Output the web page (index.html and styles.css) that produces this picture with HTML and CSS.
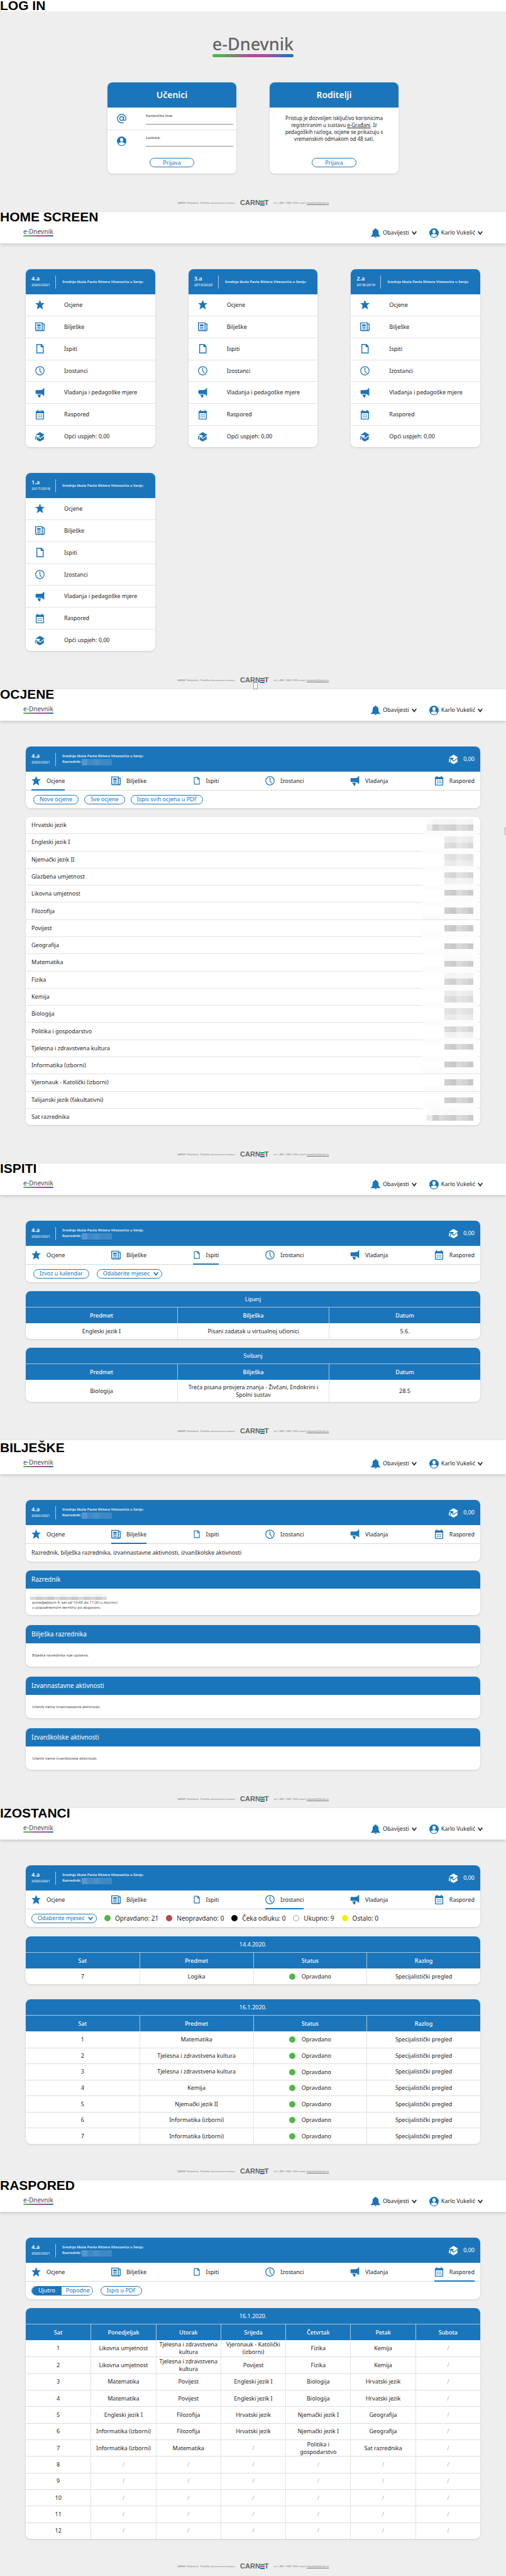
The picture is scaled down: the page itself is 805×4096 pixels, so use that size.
FILE: index.html
```html
<!DOCTYPE html>
<html lang="hr">
<head>
<meta charset="utf-8">
<meta name="viewport" content="width=device-width, initial-scale=1">
<title>e-Dnevnik</title>
<link rel="stylesheet" href="styles.css">
</head>
<body>
<svg class="sprite" aria-hidden="true">
  <symbol id="star" viewBox="0 0 24 24"><path d="M12 0l3.4 8H24l-6.6 5.600L20 24l-8-5.200L4 24l2.600-10.400L0 8h8.600z"/></symbol>
  <symbol id="news" viewBox="0 0 24 24"><path fill-rule="evenodd" d="M0 1h19v3h5v16.500a2.500 2.500 0 0 1-2.500 2.500H2.500A2.500 2.500 0 0 1 0 20.500zM2.300 3.200v17.300h14.500V3.200zM19 6.200v14.300h2.700V6.200z"/><path d="M5 6h9v4.500H5zM5 12.500h9v2H5zM5 16.500h9v2H5z"/></symbol>
  <symbol id="file" viewBox="0 0 24 24"><path fill-rule="evenodd" d="M3 0h13.500L21.500 6v18H3zM5.300 2.300v19.400h13.900V7.800H14V2.300z"/></symbol>
  <symbol id="clock" viewBox="0 0 24 24"><g fill="none" stroke="currentColor" stroke-width="2" stroke-linecap="round"><circle cx="12" cy="12" r="10.800"/><path d="M12 5v7.500l4 5.500"/></g></symbol>
  <symbol id="horn" viewBox="0 0 24 24"><path d="M1 7.500C1 6 2 5.300 3.500 5.300H13c4 0 7-2 8.500-5.300H23v19.500h-1.500c-2-2.800-4.500-4-8.500-4.500H3.500C2 15 1 14 1 12.500zM5.500 16.700H14l1 1.800-2 1V24H9.500z"/></symbol>
  <symbol id="calendar" viewBox="0 0 24 24"><path fill-rule="evenodd" d="M5 0h2.500v2.500h9V0H19v2.500h1.500a2 2 0 0 1 2 2V22a2 2 0 0 1-2 2h-17a2 2 0 0 1-2-2V4.500a2 2 0 0 1 2-2H5zM3.700 8v13.800h16.600V8z"/><path d="M6.500 11H9v2.500H6.500zM10.800 11h2.500v2.500h-2.500zM15 11h2.500v2.500H15zM6.500 16H9v2.500H6.500zM10.800 16h2.500v2.500h-2.500zM15 16h2.500v2.500H15z"/></symbol>
  <symbol id="cap" viewBox="0 0 24 24"><path d="M12 0l11.500 6.700-11 8.500L9.500 12l3.500-2.500c-2-1.800-6-2-10.500-1.700L1 7z"/><path d="M1 10h3l-1.500 9H0zM5 11.500l7.500 6 9.500-7.500v8.500L12 24l-7.500-4z"/></symbol>
  <symbol id="bell" viewBox="0 0 24 24"><path d="M12 0c1.300 0 2 1 2 2 4 1 5.500 4 5.500 8 0 6 1.500 8 4.500 9.500V21H0v-1.500C3 18 4.500 16 4.500 10c0-4 1.500-7 5.500-8 0-1 .7-2 2-2zM9.500 22h5c0 1.200-1 2-2.500 2s-2.500-.8-2.500-2z"/></symbol>
  <symbol id="user" viewBox="0 0 24 24"><path fill-rule="evenodd" d="M12 0a12 12 0 1 0 0 24 12 12 0 0 0 0-24zm0 3.500c2.500 0 4 2 4 4.700S14.500 13.500 12 13.500 8 11 8 8.200s1.500-4.700 4-4.700zM12 22c-3.500 0-6.500-1.500-8-4.200C5 15.800 8 14.800 12 14.800s7 1 8 3C18.500 20.500 15.500 22 12 22z"/></symbol>
  <symbol id="at" viewBox="0 0 24 24"><g fill="none" stroke="currentColor" stroke-width="2.200"><circle cx="12" cy="12" r="4.800"/><path d="M16.800 7v7c0 2 1 3 2.600 3s3.400-1.500 3.400-5A10.800 10.800 0 1 0 12 22.800h5"/></g></symbol>
  <symbol id="chev" viewBox="0 0 12 12"><path d="M1 3l5 6.500L11 3" fill="none" stroke="currentColor" stroke-width="2.400"/></symbol>
</svg>

<section class="screen">
  <h2 class="screen-title login-title">LOG IN</h2>
  <main class="login">
    <h1 class="brand brand-lg">e-Dnevnik</h1>
    <div class="login-cards">
      <form class="card login-card">
        <h3 class="login-head">Učenici</h3>
        <div class="field"><svg class="icon"><use href="#at"/></svg><div class="field-in"><label for="user-name">Korisničko ime:</label><input id="user-name" type="text"></div></div>
        <div class="field"><svg class="icon"><use href="#user"/></svg><div class="field-in"><label for="pass">Lozinka:</label><input id="pass" type="password"></div></div>
        <button class="pill login-btn" type="button">Prijava</button>
      </form>
      <div class="card login-card">
        <h3 class="login-head">Roditelji</h3>
        <p class="login-text">Pristup je dozvoljen isključivo korisnicima registriranim u sustavu <a href="#">e-Građani</a>. Iz pedagoških razloga, ocjene se prikazuju s vremenskim odmakom od 48 sati.</p>
        <button class="pill login-btn" type="button">Prijava</button>
      </div>
    </div>
  </main>
  <footer class="foot"><span>CARNET Helpdesk - Podrška obrazovnom sustavu</span><span class="carnet">CARN<i class="bars"></i>T</span><span>tel: +385 1 6661 500 e-mail: <a href="#">helpdesk@skole.hr</a></span></footer>
</section>

<section class="screen">
  <header class="top">
    <h2 class="screen-title">HOME SCREEN</h2>
    <div class="bar"><a class="brand" href="#">e-Dnevnik</a><nav class="user-nav"><button class="nav-btn"><svg class="icon"><use href="#bell"/></svg>Obavijesti<svg class="chev"><use href="#chev"/></svg></button><button class="nav-btn"><svg class="icon"><use href="#user"/></svg>Karlo Vukelić<svg class="chev"><use href="#chev"/></svg></button></nav></div>
  </header>
  <main class="content classes">
    <article class="card class-card">
      <header class="class-head"><div class="year"><b>4.a</b><span>2020/2021</span></div><p class="school">Srednja škola Pavla Rittera Vitezovića u Senju</p></header>
      <a class="row" href="#"><svg class="icon"><use href="#star"/></svg>Ocjene</a>
      <a class="row" href="#"><svg class="icon"><use href="#news"/></svg>Bilješke</a>
      <a class="row" href="#"><svg class="icon"><use href="#file"/></svg>Ispiti</a>
      <a class="row" href="#"><svg class="icon"><use href="#clock"/></svg>Izostanci</a>
      <a class="row" href="#"><svg class="icon"><use href="#horn"/></svg>Vladanja i pedagoške mjere</a>
      <a class="row" href="#"><svg class="icon"><use href="#calendar"/></svg>Raspored</a>
      <a class="row" href="#"><svg class="icon"><use href="#cap"/></svg>Opći uspjeh: 0,00</a>
    </article>
    <article class="card class-card">
      <header class="class-head"><div class="year"><b>3.a</b><span>2019/2020</span></div><p class="school">Srednja škola Pavla Rittera Vitezovića u Senju</p></header>
      <a class="row" href="#"><svg class="icon"><use href="#star"/></svg>Ocjene</a>
      <a class="row" href="#"><svg class="icon"><use href="#news"/></svg>Bilješke</a>
      <a class="row" href="#"><svg class="icon"><use href="#file"/></svg>Ispiti</a>
      <a class="row" href="#"><svg class="icon"><use href="#clock"/></svg>Izostanci</a>
      <a class="row" href="#"><svg class="icon"><use href="#horn"/></svg>Vladanja i pedagoške mjere</a>
      <a class="row" href="#"><svg class="icon"><use href="#calendar"/></svg>Raspored</a>
      <a class="row" href="#"><svg class="icon"><use href="#cap"/></svg>Opći uspjeh: 0,00</a>
    </article>
    <article class="card class-card">
      <header class="class-head"><div class="year"><b>2.a</b><span>2018/2019</span></div><p class="school">Srednja škola Pavla Rittera Vitezovića u Senju</p></header>
      <a class="row" href="#"><svg class="icon"><use href="#star"/></svg>Ocjene</a>
      <a class="row" href="#"><svg class="icon"><use href="#news"/></svg>Bilješke</a>
      <a class="row" href="#"><svg class="icon"><use href="#file"/></svg>Ispiti</a>
      <a class="row" href="#"><svg class="icon"><use href="#clock"/></svg>Izostanci</a>
      <a class="row" href="#"><svg class="icon"><use href="#horn"/></svg>Vladanja i pedagoške mjere</a>
      <a class="row" href="#"><svg class="icon"><use href="#calendar"/></svg>Raspored</a>
      <a class="row" href="#"><svg class="icon"><use href="#cap"/></svg>Opći uspjeh: 0,00</a>
    </article>
    <article class="card class-card">
      <header class="class-head"><div class="year"><b>1.a</b><span>2017/2018</span></div><p class="school">Srednja škola Pavla Rittera Vitezovića u Senju</p></header>
      <a class="row" href="#"><svg class="icon"><use href="#star"/></svg>Ocjene</a>
      <a class="row" href="#"><svg class="icon"><use href="#news"/></svg>Bilješke</a>
      <a class="row" href="#"><svg class="icon"><use href="#file"/></svg>Ispiti</a>
      <a class="row" href="#"><svg class="icon"><use href="#clock"/></svg>Izostanci</a>
      <a class="row" href="#"><svg class="icon"><use href="#horn"/></svg>Vladanja i pedagoške mjere</a>
      <a class="row" href="#"><svg class="icon"><use href="#calendar"/></svg>Raspored</a>
      <a class="row" href="#"><svg class="icon"><use href="#cap"/></svg>Opći uspjeh: 0,00</a>
    </article>
  </main>
  <footer class="foot"><span>CARNET Helpdesk - Podrška obrazovnom sustavu</span><span class="carnet">CARN<i class="bars"></i>T</span><span>tel: +385 1 6661 500 e-mail: <a href="#">helpdesk@skole.hr</a></span><i class="handle handle-bottom"></i></footer>
</section>

<section class="screen">
  <header class="top">
    <h2 class="screen-title">OCJENE</h2>
    <div class="bar"><a class="brand" href="#">e-Dnevnik</a><nav class="user-nav"><button class="nav-btn"><svg class="icon"><use href="#bell"/></svg>Obavijesti<svg class="chev"><use href="#chev"/></svg></button><button class="nav-btn"><svg class="icon"><use href="#user"/></svg>Karlo Vukelić<svg class="chev"><use href="#chev"/></svg></button></nav></div>
  </header>
  <main class="content">
    <div class="card">
      <header class="class-head"><div class="year"><b>4.a</b><span>2020/2021</span></div><p class="school">Srednja škola Pavla Rittera Vitezovića u Senju<br>Razrednik:<i class="veil"></i></p><p class="avg"><svg class="icon"><use href="#cap"/></svg>0,00</p></header>
      <nav class="tabs"><a class="on" href="#"><svg class="icon"><use href="#star"/></svg>Ocjene</a><a href="#"><svg class="icon"><use href="#news"/></svg>Bilješke</a><a href="#"><svg class="icon thin"><use href="#file"/></svg>Ispiti</a><a href="#"><svg class="icon"><use href="#clock"/></svg>Izostanci</a><a href="#"><svg class="icon"><use href="#horn"/></svg>Vladanja</a><a href="#"><svg class="icon"><use href="#calendar"/></svg>Raspored</a></nav>
      <div class="tools inset"><button class="pill">Nove ocjene</button><button class="pill">Sve ocjene</button><button class="pill">Ispis svih ocjena u PDF</button></div>
    </div>
    <div class="card grades">
      <a href="#">Hrvatski jezik</a><a href="#">Engleski jezik I</a><a href="#">Njemački jezik II</a><a href="#">Glazbena umjetnost</a><a href="#">Likovna umjetnost</a><a href="#">Filozofija</a><a href="#">Povijest</a><a href="#">Geografija</a><a href="#">Matematika</a><a href="#">Fizika</a><a href="#">Kemija</a><a href="#">Biologija</a><a href="#">Politika i gospodarstvo</a><a href="#">Tjelesna i zdravstvena kultura</a><a href="#">Informatika (izborni)</a><a href="#">Vjeronauk - Katolički (izborni)</a><a href="#">Talijanski jezik (fakultativni)</a><a href="#">Sat razrednika</a>
      <svg class="mosaic" viewBox="0 0 93 513" preserveAspectRatio="none" shape-rendering="crispEdges" aria-hidden="true">
        <defs>
          <g id="m5"><path fill-opacity=".88" d="M37 0h10v10H37z"/><path d="M47 0h10v10H47z"/><path fill-opacity=".68" d="M57 0h10v10H57z"/><path fill-opacity=".82" d="M67 0h10v10H67z"/><path d="M77 0h9v10h-9z"/></g>
          <g id="m8"><path fill-opacity=".4" d="M7 0h10v10H7z"/><path d="M17 0h10v10H17z"/><path fill-opacity=".75" d="M27 0h10v10H27z"/><use href="#m5"/></g>
          <path id="band" fill="#fcfcfc" d="M0 0h93v10H0z"/>
        </defs>
        <use href="#band" y="20"/><use href="#band" y="50"/><use href="#band" y="80"/><use href="#band" y="110"/><use href="#band" y="140"/><use href="#band" y="160"/><use href="#band" y="190"/><use href="#band" y="220"/><use href="#band" y="250"/><use href="#band" y="280"/><use href="#band" y="310"/><use href="#band" y="340"/><use href="#band" y="370"/><use href="#band" y="400"/><use href="#band" y="420"/><use href="#band" y="450"/><use href="#band" y="480"/>
        <use href="#m8" y="0" opacity=".04"/><use href="#m8" y="10" opacity=".18"/>
        <use href="#m5" y="30" opacity=".08"/><use href="#m5" y="40" opacity=".14"/>
        <use href="#m5" y="60" opacity=".12"/><use href="#m5" y="70" opacity=".08"/>
        <use href="#m5" y="90" opacity=".16"/><use href="#m5" y="100" opacity=".05"/>
        <use href="#m5" y="120" opacity=".2"/><use href="#m5" y="130" opacity=".01"/>
        <use href="#m5" y="150" opacity=".21"/><use href="#m5" y="180" opacity=".21"/><use href="#m5" y="210" opacity=".21"/>
        <use href="#m5" y="230" opacity=".02"/><use href="#m5" y="240" opacity=".2"/>
        <use href="#m5" y="260" opacity=".04"/><use href="#m5" y="270" opacity=".18"/>
        <use href="#m5" y="290" opacity=".08"/><use href="#m5" y="300" opacity=".14"/>
        <use href="#m5" y="320" opacity=".12"/><use href="#m5" y="330" opacity=".08"/>
        <use href="#m5" y="350" opacity=".16"/><use href="#m5" y="360" opacity=".05"/>
        <use href="#m5" y="380" opacity=".2"/><use href="#m5" y="410" opacity=".21"/><use href="#m5" y="440" opacity=".21"/><use href="#m5" y="470" opacity=".21"/>
        <use href="#m8" y="490" opacity=".02"/><use href="#m8" y="500" opacity=".2"/>
      </svg>
      <i class="handle handle-side"></i>
    </div>
  </main>
  <footer class="foot"><span>CARNET Helpdesk - Podrška obrazovnom sustavu</span><span class="carnet">CARN<i class="bars"></i>T</span><span>tel: +385 1 6661 500 e-mail: <a href="#">helpdesk@skole.hr</a></span></footer>
</section>

<section class="screen">
  <header class="top">
    <h2 class="screen-title">ISPITI</h2>
    <div class="bar"><a class="brand" href="#">e-Dnevnik</a><nav class="user-nav"><button class="nav-btn"><svg class="icon"><use href="#bell"/></svg>Obavijesti<svg class="chev"><use href="#chev"/></svg></button><button class="nav-btn"><svg class="icon"><use href="#user"/></svg>Karlo Vukelić<svg class="chev"><use href="#chev"/></svg></button></nav></div>
  </header>
  <main class="content">
    <div class="card">
      <header class="class-head"><div class="year"><b>4.a</b><span>2020/2021</span></div><p class="school">Srednja škola Pavla Rittera Vitezovića u Senju<br>Razrednik:<i class="veil"></i></p><p class="avg"><svg class="icon"><use href="#cap"/></svg>0,00</p></header>
      <nav class="tabs"><a href="#"><svg class="icon"><use href="#star"/></svg>Ocjene</a><a href="#"><svg class="icon"><use href="#news"/></svg>Bilješke</a><a class="on" href="#"><svg class="icon thin"><use href="#file"/></svg>Ispiti</a><a href="#"><svg class="icon"><use href="#clock"/></svg>Izostanci</a><a href="#"><svg class="icon"><use href="#horn"/></svg>Vladanja</a><a href="#"><svg class="icon"><use href="#calendar"/></svg>Raspored</a></nav>
      <div class="tools inset wide"><button class="pill">Izvoz u kalendar</button><span class="picker"><select class="pill" aria-label="Odaberite mjesec"><option>Odaberite mjesec</option></select><svg class="chev"><use href="#chev"/></svg></span></div>
    </div>
    <table class="card grid">
      <thead><tr><th colspan="3">Lipanj</th></tr><tr><th>Predmet</th><th>Bilješka</th><th>Datum</th></tr></thead>
      <tbody><tr><td>Engleski jezik I</td><td>Pisani zadatak u virtualnoj učionici</td><td>5.6.</td></tr></tbody>
    </table>
    <table class="card grid">
      <thead><tr><th colspan="3">Svibanj</th></tr><tr><th>Predmet</th><th>Bilješka</th><th>Datum</th></tr></thead>
      <tbody><tr class="tall"><td>Biologija</td><td>Treća pisana provjera znanja - Živčani, Endokrini i Spolni sustav</td><td>28.5</td></tr></tbody>
    </table>
  </main>
  <footer class="foot"><span>CARNET Helpdesk - Podrška obrazovnom sustavu</span><span class="carnet">CARN<i class="bars"></i>T</span><span>tel: +385 1 6661 500 e-mail: <a href="#">helpdesk@skole.hr</a></span></footer>
</section>

<section class="screen">
  <header class="top accent">
    <h2 class="screen-title">BILJEŠKE</h2>
    <div class="bar"><a class="brand" href="#">e-Dnevnik</a><nav class="user-nav"><button class="nav-btn"><svg class="icon"><use href="#bell"/></svg>Obavijesti<svg class="chev"><use href="#chev"/></svg></button><button class="nav-btn"><svg class="icon"><use href="#user"/></svg>Karlo Vukelić<svg class="chev"><use href="#chev"/></svg></button></nav></div>
  </header>
  <main class="content notes">
    <div class="card">
      <header class="class-head"><div class="year"><b>4.a</b><span>2020/2021</span></div><p class="school">Srednja škola Pavla Rittera Vitezovića u Senju<br>Razrednik:<i class="veil"></i></p><p class="avg"><svg class="icon"><use href="#cap"/></svg>0,00</p></header>
      <nav class="tabs"><a href="#"><svg class="icon"><use href="#star"/></svg>Ocjene</a><a class="on" href="#"><svg class="icon"><use href="#news"/></svg>Bilješke</a><a href="#"><svg class="icon thin"><use href="#file"/></svg>Ispiti</a><a href="#"><svg class="icon"><use href="#clock"/></svg>Izostanci</a><a href="#"><svg class="icon"><use href="#horn"/></svg>Vladanja</a><a href="#"><svg class="icon"><use href="#calendar"/></svg>Raspored</a></nav>
      <p class="tools">Razrednik, bilješka razrednika, izvannastavne aktivnosti, izvanškolske aktivnosti</p>
    </div>
    <section class="card note"><h3>Razrednik</h3><div class="note-body tutor"><i class="name-veil"></i><p>ponedjeljkom 4. sat od 10:45 do 11:30 u zbornici<br>u popodnevnom terminu po dogovoru</p></div></section>
    <section class="card note"><h3>Bilješka razrednika</h3><p class="note-body">Bilješka razrednika nije upisana.</p></section>
    <section class="card note"><h3>Izvannastavne aktivnosti</h3><p class="note-body">Učenik nema izvannastavne aktivnosti.</p></section>
    <section class="card note"><h3>Izvanškolske aktivnosti</h3><p class="note-body">Učenik nema izvanškolske aktivnosti.</p></section>
  </main>
  <footer class="foot"><span>CARNET Helpdesk - Podrška obrazovnom sustavu</span><span class="carnet">CARN<i class="bars"></i>T</span><span>tel: +385 1 6661 500 e-mail: <a href="#">helpdesk@skole.hr</a></span></footer>
</section>

<section class="screen">
  <header class="top">
    <h2 class="screen-title">IZOSTANCI</h2>
    <div class="bar"><a class="brand" href="#">e-Dnevnik</a><nav class="user-nav"><button class="nav-btn"><svg class="icon"><use href="#bell"/></svg>Obavijesti<svg class="chev"><use href="#chev"/></svg></button><button class="nav-btn"><svg class="icon"><use href="#user"/></svg>Karlo Vukelić<svg class="chev"><use href="#chev"/></svg></button></nav></div>
  </header>
  <main class="content absences">
    <div class="card">
      <header class="class-head"><div class="year"><b>4.a</b><span>2020/2021</span></div><p class="school">Srednja škola Pavla Rittera Vitezovića u Senju<br>Razrednik:<i class="veil"></i></p><p class="avg"><svg class="icon"><use href="#cap"/></svg>0,00</p></header>
      <nav class="tabs"><a href="#"><svg class="icon"><use href="#star"/></svg>Ocjene</a><a href="#"><svg class="icon"><use href="#news"/></svg>Bilješke</a><a href="#"><svg class="icon thin"><use href="#file"/></svg>Ispiti</a><a class="on" href="#"><svg class="icon"><use href="#clock"/></svg>Izostanci</a><a href="#"><svg class="icon"><use href="#horn"/></svg>Vladanja</a><a href="#"><svg class="icon"><use href="#calendar"/></svg>Raspored</a></nav>
      <div class="tools wide"><span class="picker"><select class="pill" aria-label="Odaberite mjesec"><option>Odaberite mjesec</option></select><svg class="chev"><use href="#chev"/></svg></span><span class="key"><i class="dot"></i>Opravdano: 21</span><span class="key"><i class="dot red"></i>Neopravdano: 0</span><span class="key"><i class="dot black"></i>Čeka odluku: 0</span><span class="key"><i class="dot hollow"></i>Ukupno: 9</span><span class="key"><i class="dot yellow"></i>Ostalo: 0</span></div>
    </div>
    <table class="card grid">
      <thead><tr><th colspan="4">14.4.2020.</th></tr><tr><th>Sat</th><th>Predmet</th><th>Status</th><th>Razlog</th></tr></thead>
      <tbody><tr><td>7</td><td>Logika</td><td><span class="status"><i class="dot"></i>Opravdano</span></td><td>Specijalistički pregled</td></tr></tbody>
    </table>
    <table class="card grid days">
      <thead><tr><th colspan="4">16.1.2020.</th></tr><tr><th>Sat</th><th>Predmet</th><th>Status</th><th>Razlog</th></tr></thead>
      <tbody>
        <tr><td>1</td><td>Matematika</td><td><span class="status"><i class="dot"></i>Opravdano</span></td><td>Specijalistički pregled</td></tr>
        <tr><td>2</td><td>Tjelesna i zdravstvena kultura</td><td><span class="status"><i class="dot"></i>Opravdano</span></td><td>Specijalistički pregled</td></tr>
        <tr><td>3</td><td>Tjelesna i zdravstvena kultura</td><td><span class="status"><i class="dot"></i>Opravdano</span></td><td>Specijalistički pregled</td></tr>
        <tr><td>4</td><td>Kemija</td><td><span class="status"><i class="dot"></i>Opravdano</span></td><td>Specijalistički pregled</td></tr>
        <tr><td>5</td><td>Njemački jezik II</td><td><span class="status"><i class="dot"></i>Opravdano</span></td><td>Specijalistički pregled</td></tr>
        <tr><td>6</td><td>Informatika (izborni)</td><td><span class="status"><i class="dot"></i>Opravdano</span></td><td>Specijalistički pregled</td></tr>
        <tr><td>7</td><td>Informatika (izborni)</td><td><span class="status"><i class="dot"></i>Opravdano</span></td><td>Specijalistički pregled</td></tr>
      </tbody>
    </table>
  </main>
  <footer class="foot"><span>CARNET Helpdesk - Podrška obrazovnom sustavu</span><span class="carnet">CARN<i class="bars"></i>T</span><span>tel: +385 1 6661 500 e-mail: <a href="#">helpdesk@skole.hr</a></span></footer>
</section>

<section class="screen">
  <header class="top">
    <h2 class="screen-title">RASPORED</h2>
    <div class="bar"><a class="brand" href="#">e-Dnevnik</a><nav class="user-nav"><button class="nav-btn"><svg class="icon"><use href="#bell"/></svg>Obavijesti<svg class="chev"><use href="#chev"/></svg></button><button class="nav-btn"><svg class="icon"><use href="#user"/></svg>Karlo Vukelić<svg class="chev"><use href="#chev"/></svg></button></nav></div>
  </header>
  <main class="content schedule">
    <div class="card">
      <header class="class-head"><div class="year"><b>4.a</b><span>2020/2021</span></div><p class="school">Srednja škola Pavla Rittera Vitezovića u Senju<br>Razrednik:<i class="veil"></i></p><p class="avg"><svg class="icon"><use href="#cap"/></svg>0,00</p></header>
      <nav class="tabs"><a href="#"><svg class="icon"><use href="#star"/></svg>Ocjene</a><a href="#"><svg class="icon"><use href="#news"/></svg>Bilješke</a><a href="#"><svg class="icon thin"><use href="#file"/></svg>Ispiti</a><a href="#"><svg class="icon"><use href="#clock"/></svg>Izostanci</a><a href="#"><svg class="icon"><use href="#horn"/></svg>Vladanja</a><a class="on" href="#"><svg class="icon"><use href="#calendar"/></svg>Raspored</a></nav>
      <div class="tools wide"><span class="toggle"><button class="active">Ujutro</button><button>Popodne</button></span><button class="pill">Ispis u PDF</button></div>
    </div>
    <table class="card grid week">
      <thead><tr><th colspan="7">16.1.2020.</th></tr><tr><th>Sat</th><th>Ponedjeljak</th><th>Utorak</th><th>Srijeda</th><th>Četvrtak</th><th>Petak</th><th>Subota</th></tr></thead>
      <tbody>
        <tr><td>1</td><td>Likovna umjetnost</td><td>Tjelesna i zdravstvena kultura</td><td>Vjeronauk - Katolički (izborni)</td><td>Fizika</td><td>Kemija</td><td class="no">/</td></tr>
        <tr><td>2</td><td>Likovna umjetnost</td><td>Tjelesna i zdravstvena kultura</td><td>Povijest</td><td>Fizika</td><td>Kemija</td><td class="no">/</td></tr>
        <tr><td>3</td><td>Matematika</td><td>Povijest</td><td>Engleski jezik I</td><td>Biologija</td><td>Hrvatski jezik</td><td class="no">/</td></tr>
        <tr><td>4</td><td>Matematika</td><td>Povijest</td><td>Engleski jezik I</td><td>Biologija</td><td>Hrvatski jezik</td><td class="no">/</td></tr>
        <tr><td>5</td><td>Engleski jezik I</td><td>Filozofija</td><td>Hrvatski jezik</td><td>Njemački jezik I</td><td>Geografija</td><td class="no">/</td></tr>
        <tr><td>6</td><td>Informatika (izborni)</td><td>Filozofija</td><td>Hrvatski jezik</td><td>Njemački jezik I</td><td>Geografija</td><td class="no">/</td></tr>
        <tr><td>7</td><td>Informatika (izborni)</td><td>Matematika</td><td class="no">/</td><td>Politika i<br>gospodarstvo</td><td>Sat razrednika</td><td class="no">/</td></tr>
        <tr><td>8</td><td class="no">/</td><td class="no">/</td><td class="no">/</td><td class="no">/</td><td class="no">/</td><td class="no">/</td></tr>
        <tr><td>9</td><td class="no">/</td><td class="no">/</td><td class="no">/</td><td class="no">/</td><td class="no">/</td><td class="no">/</td></tr>
        <tr><td>10</td><td class="no">/</td><td class="no">/</td><td class="no">/</td><td class="no">/</td><td class="no">/</td><td class="no">/</td></tr>
        <tr><td>11</td><td class="no">/</td><td class="no">/</td><td class="no">/</td><td class="no">/</td><td class="no">/</td><td class="no">/</td></tr>
        <tr><td>12</td><td class="no">/</td><td class="no">/</td><td class="no">/</td><td class="no">/</td><td class="no">/</td><td class="no">/</td></tr>
      </tbody>
    </table>
  </main>
  <footer class="foot"><span>CARNET Helpdesk - Podrška obrazovnom sustavu</span><span class="carnet">CARN<i class="bars"></i>T</span><span>tel: +385 1 6661 500 e-mail: <a href="#">helpdesk@skole.hr</a></span></footer>
</section>
</body>
</html>
```
FILE: styles.css
```css
:root {
  --blue: #1b75bb;
  --ink: #262626;
  --line: #e2e2e2;
  --bg: #eeeeee;
}
* { box-sizing: border-box; }
html { background: var(--bg); }
body {
  margin: 0;
  background: var(--bg);
  color: var(--ink);
  font-family: "Noto Sans", "Open Sans", sans-serif;
  font-size: 9px;
  line-height: 12px;
  overflow-x: hidden;
}
h1, h2, h3, p { margin: 0; font-weight: 400; font-size: inherit; }
a { color: inherit; text-decoration: none; }
button, input, select { font: inherit; color: inherit; margin: 0; }
button { cursor: pointer; }
.sprite { position: absolute; width: 0; height: 0; }
.icon { width: 15px; height: 15px; fill: currentColor; color: var(--blue); flex: none; }
.icon.thin { width: 12px; }
.chev { width: 8px; height: 8px; flex: none; }

/* Screen heading and top bar */
.screen-title {
  font-family: "Liberation Sans", Arial, sans-serif;
  font-weight: 700;
  font-size: 21px;
  line-height: 16px;
  color: #000;
}
.login-title { background: #fff; line-height: 18px; }
.top { background: #fff; box-shadow: 0 2px 5px rgba(0, 0, 0, .16); position: relative; }
.top.accent { padding-top: 4px; }
.bar { height: 34px; padding: 0 37px; display: flex; align-items: center; justify-content: space-between; }
.brand { color: #636466; font-weight: 500; font-size: 10px; line-height: 9px; }
.brand::after {
  content: "";
  display: block;
  height: 2px;
  margin-top: 1px;
  border-radius: 1px;
  background: linear-gradient(90deg, #4bb749 10%, #b14a9d 45%, #b14a9d 65%, #1b75bb 95%);
}
.user-nav { display: flex; gap: 20px; }
.nav-btn { display: flex; align-items: center; gap: 4px; padding: 0; border: 0; background: none; }

/* Cards */
.card { background: #fff; border-radius: 8px; box-shadow: 0 1px 3px rgba(0, 0, 0, .14); }
.content { padding: 41px 41px 32px; display: flex; flex-direction: column; gap: 14px; }
.pill {
  height: 15px;
  padding: 0 9px;
  border: 1px solid var(--blue);
  border-radius: 8px;
  background: #fff;
  color: var(--blue);
  line-height: 12px;
}

/* Log in */
.login { padding: 37px 41px 32px; display: flex; flex-direction: column; align-items: center; gap: 40px; }
.brand-lg { font-size: 27px; line-height: 30px; }
.brand-lg::after { height: 5px; border-radius: 3px; }
.login-cards { display: grid; grid-template-columns: 205px 205px; gap: 53px; }
.login-card { min-height: 145px; display: flex; flex-direction: column; align-items: center; }
.login-head {
  align-self: stretch;
  height: 40px;
  border-radius: 8px 8px 0 0;
  background: var(--blue);
  color: #fff;
  font-size: 14px;
  font-weight: 600;
  line-height: 40px;
  text-align: center;
}
.field { align-self: stretch; height: 35px; padding: 0 5px 0 15px; display: flex; align-items: center; gap: 31px; }
.field + .field { border-top: 1px solid var(--line); }
.field-in { flex: 1; display: flex; flex-direction: column; }
.field-in label { font-size: 6px; line-height: 8px; }
.field-in input { width: 100%; height: 10px; padding: 0; border: 0; border-bottom: 1px solid #8a8a8a; background: none; outline: 0; }
.login-text { padding: 11px 12px 0; font-size: 8px; line-height: 11px; text-align: center; }
.login-text a { text-decoration: underline; }
.login-btn { width: 71px; margin-top: auto; margin-bottom: 10px; }

/* Home */
.classes { display: grid; grid-template-columns: repeat(3, 1fr); gap: 41px 53px; }
.class-card { min-height: 283px; display: flex; flex-direction: column; }
.class-head {
  height: 40px;
  padding: 0 9px;
  border-radius: 8px 8px 0 0;
  background: var(--blue);
  color: #fff;
  display: flex;
  align-items: center;
}
.year { width: 39px; height: 21px; flex: none; border-right: 1px solid rgba(255, 255, 255, .6); display: flex; flex-direction: column; justify-content: center; line-height: 10px; }
.year b { font-weight: 600; font-size: 9px; }
.year span { font-size: 6px; }
.school { padding-left: 10px; font-size: 6px; line-height: 9px; white-space: nowrap; font-weight: 500; }
.row { flex: 1; padding-left: 15px; display: flex; align-items: center; gap: 31px; }
.row + .row { border-top: 1px solid var(--line); }

/* Class panel with tabs */
.veil { display: inline-block; width: 48px; height: 10px; margin-left: 1px; vertical-align: top; background: linear-gradient(90deg, #5597cd 0 9px, #3f8ac7 9px 19px, #4790ca 19px 28px, #3d88c5 28px); }
.avg { margin-left: auto; display: flex; align-items: center; gap: 8px; }
.avg .icon { color: #fff; }
.tabs { height: 30px; padding: 0 9px; display: flex; justify-content: space-between; border-bottom: 1px solid #d8d8d8; }
.tabs a { display: flex; align-items: center; gap: 9px; }
.tabs .on { box-shadow: 0 1px 0 var(--blue), inset 0 -1px 0 var(--blue); }
.tools { height: 28px; padding: 0 9px; display: flex; align-items: center; gap: 9px; }
.tools.inset { padding-left: 12px; }
.tools.wide { gap: 12px; }
.picker { display: grid; align-items: center; }
.picker > * { grid-area: 1 / 1; }
.picker .pill { appearance: none; padding-right: 18px; }
.picker .chev { justify-self: end; margin-right: 6px; color: var(--blue); pointer-events: none; }

/* Grades */
.grades { position: relative; min-height: 490px; display: flex; flex-direction: column; }
.grades a { flex: 1; padding-left: 9px; display: flex; align-items: center; }
.grades a + a { border-top: 1px solid var(--line); }
.mosaic { position: absolute; top: 3px; right: 4px; width: 88px; height: calc(100% - 7px); fill: #000; }
.handle { position: absolute; width: 7px; height: 11px; border: 1px solid #999; background: #fff; }
.handle-bottom { left: 50%; bottom: 0; }
.handle-side { top: 17px; right: -46px; }

/* Tables */
.grid { width: 100%; table-layout: fixed; border-collapse: separate; border-spacing: 0; text-align: center; }
.grid tr { height: 25px; }
.grid thead tr + tr { height: 26px; }
.grid .tall { height: 35px; }
.grid th, .grid td { padding: 0 5px; }
.grid th { background: var(--blue); color: #fff; font-weight: 500; }
.grid thead tr:first-child th { border-radius: 8px 8px 0 0; font-weight: 400; }
.grid thead tr + tr th { border-top: 1px solid #a9c6dd; }
.grid th + th { border-left: 1px solid #a9c6dd; }
.grid td + td { border-left: 1px solid var(--line); }
.grid tbody tr + tr td { border-top: 1px solid #dcdcdc; }

/* Notes */
.notes { gap: 16px; }
.notes .card:first-child { margin-bottom: -2px; }
.note h3 { height: 29px; padding-left: 9px; border-radius: 8px 8px 0 0; background: var(--blue); color: #fff; font-size: 10px; line-height: 29px; }
.note-body { min-height: 37px; padding: 0 10px; display: flex; align-items: center; font-size: 6px; line-height: 8px; color: #444; }
.tutor { min-height: 42px; padding: 0 7px; flex-direction: column; align-items: flex-start; justify-content: center; }
.tutor p { padding-left: 3px; }
.name-veil { width: 122px; height: 10px; background: linear-gradient(rgba(255, 255, 255, .85) 50%, rgba(255, 255, 255, 0) 50%), repeating-linear-gradient(90deg, #dadada 0 9px, #cbcbcb 9px 19px, #d4d4d4 19px 28px, #c8c8c8 28px 38px); }

/* Absences */
.absences { padding-bottom: 29px; gap: 24px; }
.absences .card:first-child { margin-bottom: -9px; }
.key, .status { display: inline-flex; align-items: center; gap: 7px; }
.key { font-size: 10px; }
.dot { width: 10px; height: 10px; border-radius: 50%; background: #50b748; flex: none; }
.dot.red { background: #b94747; }
.dot.black { background: #000; }
.dot.hollow { background: #fff; border: 1px solid #999; }
.dot.yellow { background: #f0f000; }
.status { gap: 10px; vertical-align: middle; }
.days { height: 230px; }

/* Schedule */
.schedule { padding-bottom: 29px; }
.toggle { display: flex; height: 15px; border: 1px solid var(--blue); border-radius: 8px; overflow: hidden; }
.toggle button { padding: 0 4px 0 7px; border: 0; background: #fff; color: var(--blue); line-height: 12px; }
.toggle .active { padding: 0 10px; background: var(--blue); color: #fff; }
.week { height: 367px; }
.week th, .week td { padding: 0; }
.grid .no { color: #b0b0b0; }

/* Footer */
.foot { position: relative; height: 29px; display: flex; align-items: center; justify-content: center; gap: 8px; font-size: 4px; line-height: 8px; color: #77787b; }
.foot a { text-decoration: underline; }
.carnet { display: flex; align-items: center; font-family: "Liberation Sans", Arial, sans-serif; font-weight: 700; font-size: 11px; line-height: 11px; color: #636466; }
.bars { width: 7px; height: 8px; background: linear-gradient(#18a94b 0 2px, transparent 2px 3px, #b14a9d 3px 5px, transparent 5px 6px, #1b75bb 6px 8px); }
```
